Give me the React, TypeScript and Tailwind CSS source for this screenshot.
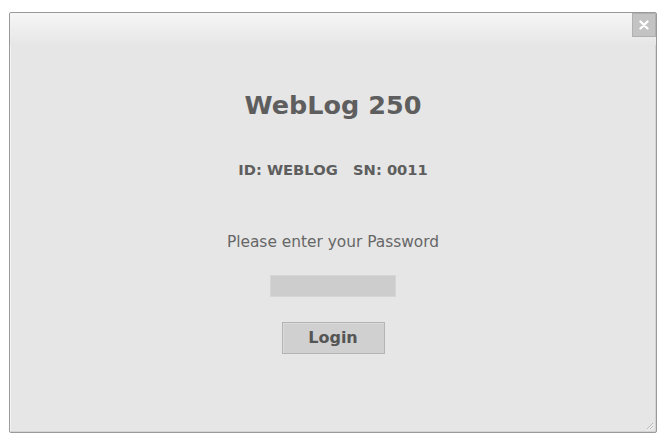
export default function App() {
  return (
    <div className="w-[661px] h-[440px] bg-white pt-[12px] pl-[9px] font-['DejaVu_Sans',sans-serif]">
      <div className="relative w-[648px] h-[421px] border border-[#9a9a9a] rounded-[2px] bg-[#e6e6e6] shadow-[inset_1px_1px_0_#f4f4f4,inset_-1px_-1px_0_#d4d4d4] flex flex-col items-center">
        {/* top gradient */}
        <div className="absolute inset-x-0 top-0 h-[32px] bg-gradient-to-b from-[#f6f6f6] to-[#e6e6e6] rounded-t-[2px]" />

        {/* close */}
        <button className="absolute top-0 right-0 w-[24px] h-[24px] bg-[#c3c3c3] border border-[#b0b0b0] flex items-center justify-center">
          <svg width="10" height="10" viewBox="0 0 10 10">
            <path d="M1.5 1.5 L8.5 8.5 M8.5 1.5 L1.5 8.5" stroke="#ffffff" strokeWidth="2.4" strokeLinecap="round" />
          </svg>
        </button>

        <h1 className="relative mt-[77px] text-[25.5px] leading-[30px] font-bold text-[#5e5e5e]">WebLog 250</h1>

        <p className="mt-[40px] text-[14.7px] leading-[20px] font-bold text-[#5e5e5e] whitespace-pre">ID: WEBLOG   SN: 0011</p>

        <p className="mt-[52px] text-[15.4px] leading-[20px] text-[#666666]">Please enter your Password</p>

        <input
          type="password"
          className="mt-[23px] w-[126px] h-[22px] bg-[#cdcdcd] border border-[#d6d6d6] outline-none"
        />

        <button className="mt-[25px] w-[103px] h-[32px] bg-[#d0d0d0] border border-[#b4b4b4] text-[16px] font-bold text-[#555555] shadow-[inset_1px_1px_0_#dadada]">
          Login
        </button>

        {/* resize grip */}
        <svg className="absolute right-[2px] bottom-[2px]" width="10" height="10" viewBox="0 0 10 10">
          <path d="M9 3 L3 9 M9 6 L6 9" stroke="#b8b8b8" strokeWidth="1" />
          <path d="M9.5 4 L4 9.5 M9.5 7 L7 9.5" stroke="#f8f8f8" strokeWidth="1" />
        </svg>
      </div>
    </div>
  )
}
